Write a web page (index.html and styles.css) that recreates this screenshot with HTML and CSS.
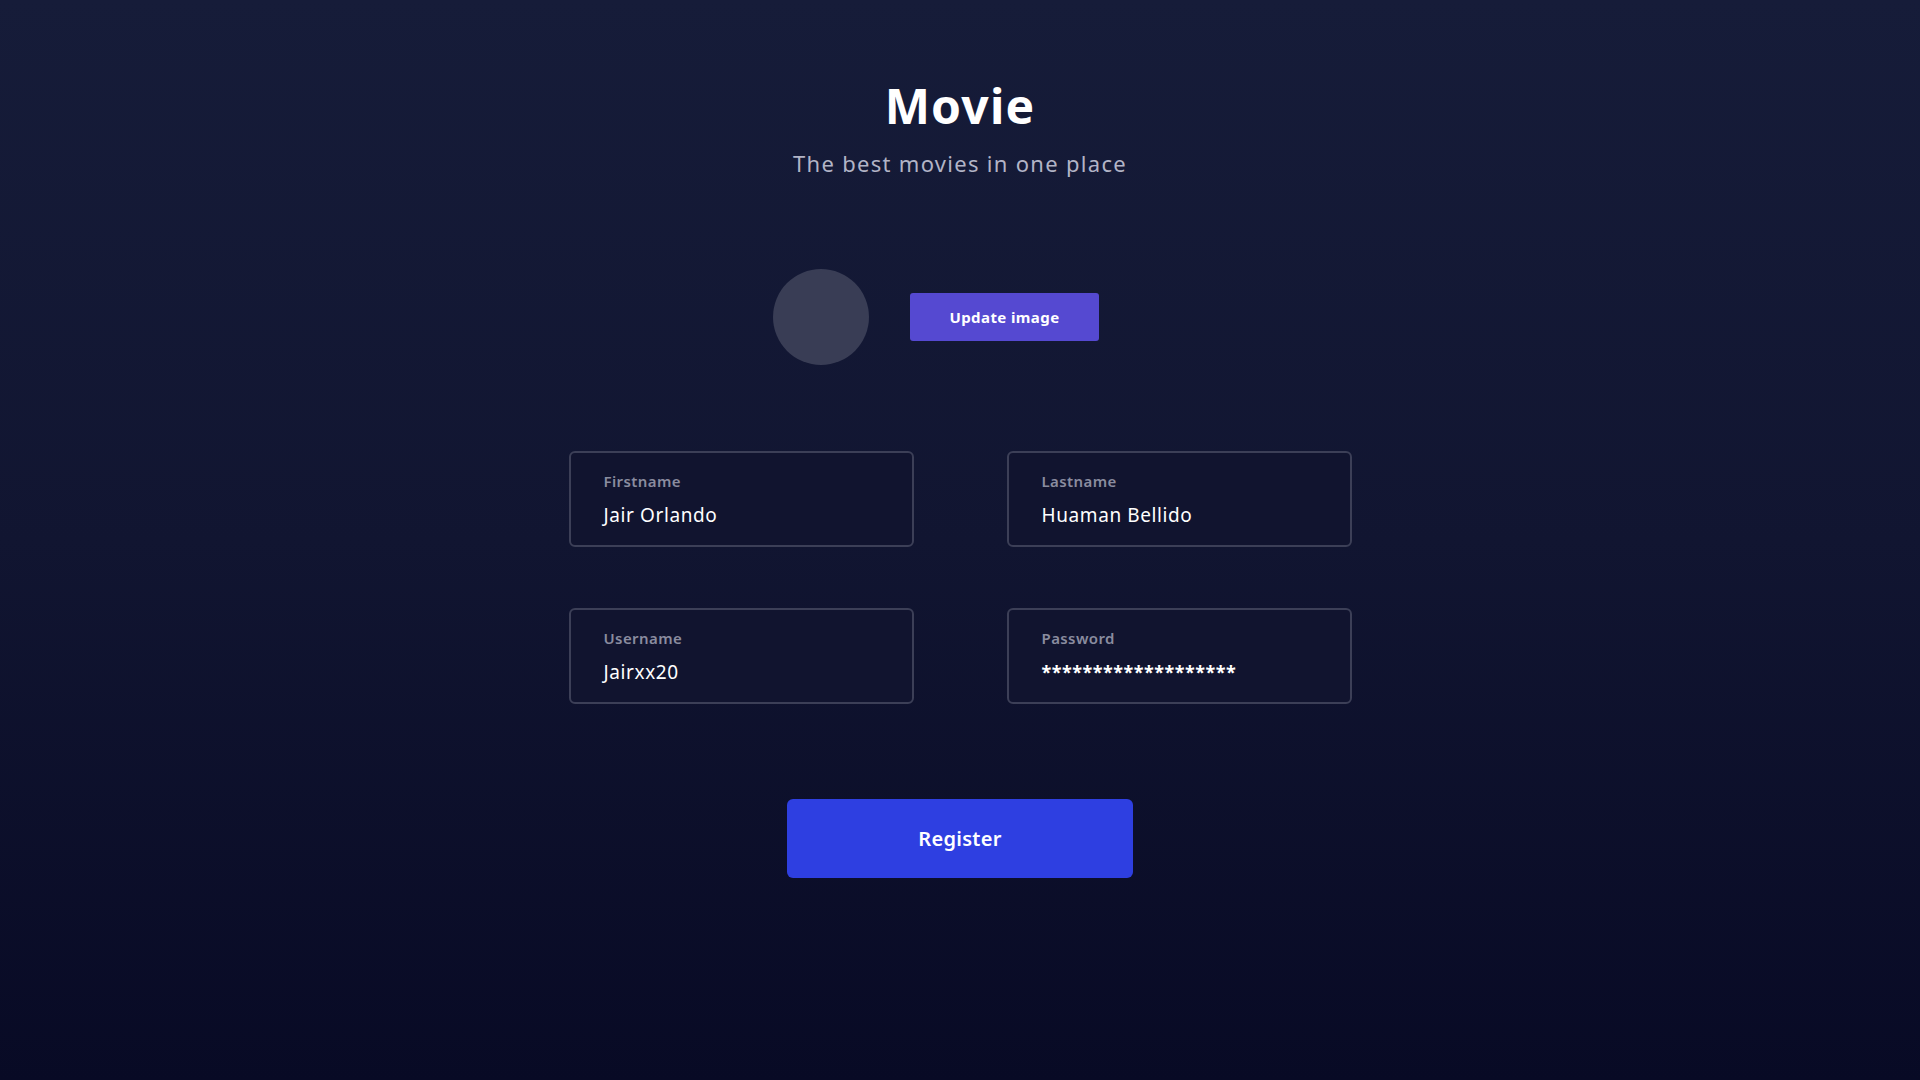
FILE: index.html
```html
<!DOCTYPE html>
<html lang="en">
<head>
<meta charset="utf-8">
<title>Movie - Register</title>
<link rel="stylesheet" href="styles.css">
</head>
<body>
<main class="page">
  <header class="brand">
    <h1 class="brand-title">Movie</h1>
    <p class="brand-subtitle">The best movies in one place</p>
  </header>

  <section class="avatar-row">
    <div class="avatar"></div>
    <button class="btn-update" type="button">Update image</button>
  </section>

  <form class="form">
    <div class="grid">
      <label class="field">
        <span class="field-label">Firstname</span>
        <span class="field-value">Jair Orlando</span>
      </label>
      <label class="field">
        <span class="field-label">Lastname</span>
        <span class="field-value">Huaman Bellido</span>
      </label>
      <label class="field">
        <span class="field-label">Username</span>
        <span class="field-value">Jairxx20</span>
      </label>
      <label class="field">
        <span class="field-label">Password</span>
        <span class="field-value field-password">*******************</span>
      </label>
    </div>
    <button class="btn-register" type="button">Register</button>
  </form>
</main>
</body>
</html>
```

FILE: styles.css
```css
* { box-sizing: border-box; }
html, body { margin: 0; padding: 0; height: 100%; }
body {
  font-family: "Noto Sans", "Lato", sans-serif;
  background: linear-gradient(180deg, #161c39 0%, #111531 50%, #080a25 100%);
  color: #ffffff;
  min-height: 1080px;
}
.page {
  display: flex;
  flex-direction: column;
  align-items: center;
  padding-top: 76px;
}
.brand { text-align: center; }
.brand-title {
  margin: 0;
  font-size: 48px;
  line-height: 60px;
  font-weight: 700;
  letter-spacing: 1.2px;
}
.brand-subtitle {
  margin: 12px 0 0;
  font-size: 22px;
  line-height: 30px;
  color: #b2b4c6;
  letter-spacing: 1.3px;
}
.avatar-row {
  display: flex;
  align-items: center;
  gap: 41px;
  margin-top: 91px;
  padding-right: 48px;
}
.avatar {
  width: 96px;
  height: 96px;
  border-radius: 50%;
  background: #393d55;
}
.btn-update {
  width: 189px;
  height: 48px;
  border: none;
  border-radius: 3px;
  background: #5549d1;
  color: #ffffff;
  font-family: inherit;
  font-size: 15px;
  font-weight: 700;
  letter-spacing: 0.4px;
}
.form {
  display: flex;
  flex-direction: column;
  align-items: center;
  margin-top: 86px;
}
.grid {
  display: grid;
  grid-template-columns: 345px 345px;
  column-gap: 93px;
  row-gap: 61px;
}
.field {
  display: flex;
  flex-direction: column;
  height: 96px;
  padding: 17px 33px 0;
  border: 2px solid #3c3f57;
  border-radius: 6px;
  background: #11142f;
}
.field-label {
  font-size: 15px;
  line-height: 22px;
  font-weight: 600;
  color: #8a8c9f;
  letter-spacing: 0.4px;
}
.field-value {
  margin-top: 10px;
  font-size: 19px;
  line-height: 26px;
  color: #ffffff;
  letter-spacing: 0.6px;
}
.field-password {
  font-size: 18px;
  font-weight: 700;
  letter-spacing: 0.5px;
}
.btn-register {
  margin-top: 95px;
  width: 346px;
  height: 79px;
  border: none;
  border-radius: 6px;
  background: #2e3fe1;
  color: #ffffff;
  font-family: inherit;
  font-size: 20px;
  font-weight: 600;
  letter-spacing: 0.3px;
}
```
